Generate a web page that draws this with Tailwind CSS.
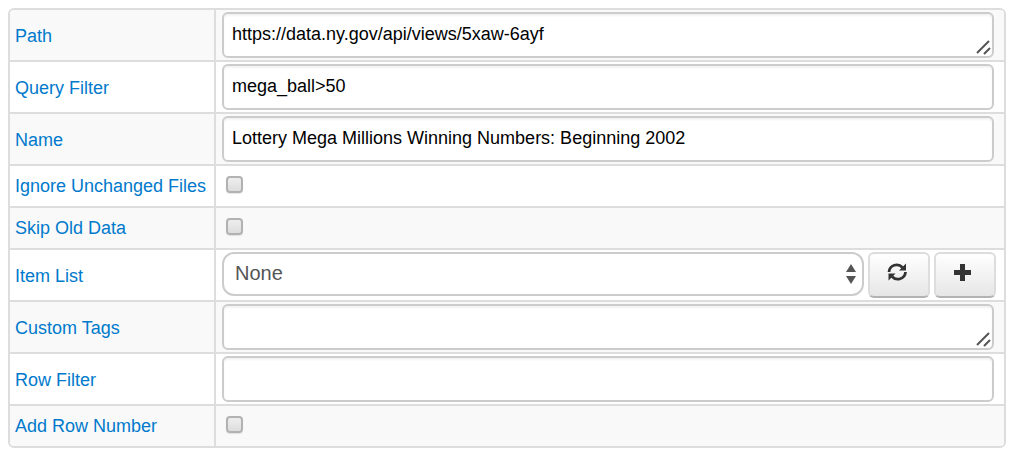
<!DOCTYPE html>
<html lang="en">
<head>
<meta charset="utf-8">
<meta name="viewport" content="width=device-width, initial-scale=1">
<title>Data source settings</title>
<script src="https://cdn.jsdelivr.net/npm/@tailwindcss/browser@4"></script>
</head>
<body class="bg-white p-2 font-['Liberation_Sans',Arial,sans-serif] text-lg leading-6 text-black">
<form>
<table class="w-full border-separate border-spacing-0 overflow-hidden rounded-md border-2 border-[#dddddd]">
  <tbody class="[&_th]:w-[206px] [&_th]:border-r-2 [&_th]:border-[#dddddd] [&_th]:pl-[5px] [&_th]:text-left [&_th]:font-normal [&_th]:whitespace-nowrap [&_th]:text-[#0079cc] [&_td]:border-[#dddddd] [&_td]:pl-1.5 [&_td]:pr-2.5 [&_tr:not(:last-child)>*]:border-b-2 [&_tr:nth-child(odd)]:bg-[#f9f9f9]">
    <tr class="h-[52px] [&>th]:pt-0.5">
      <th scope="row"><label for="path">Path</label></th>
      <td>
        <div class="relative flex">
          <textarea id="path" rows="1" class="h-[46px] w-full resize-none overflow-hidden rounded-md border-2 border-[#cccccc] bg-white px-2 py-2 shadow-[inset_0_2px_2px_rgba(0,0,0,0.05)] outline-none">https://data.ny.gov/api/views/5xaw-6ayf</textarea>
          <svg class="pointer-events-none absolute right-[3px] bottom-[3px] size-4" viewBox="0 0 16 16" fill="none" stroke="#555555" stroke-width="2" aria-hidden="true"><path d="M2 14 14 2M9 15l6-6"/></svg>
        </div>
      </td>
    </tr>
    <tr class="h-[52px] [&>th]:pt-0.5">
      <th scope="row"><label for="query">Query Filter</label></th>
      <td><input id="query" type="text" value="mega_ball&gt;50" class="block h-[46px] w-full rounded-md border-2 border-[#cccccc] bg-white px-2 pb-0.5 shadow-[inset_0_2px_2px_rgba(0,0,0,0.05)] outline-none"></td>
    </tr>
    <tr class="h-[52px] [&>th]:pt-0.5">
      <th scope="row"><label for="name">Name</label></th>
      <td><input id="name" type="text" value="Lottery Mega Millions Winning Numbers: Beginning 2002" class="block h-[46px] w-full rounded-md border-2 border-[#cccccc] bg-white px-2 pb-0.5 shadow-[inset_0_2px_2px_rgba(0,0,0,0.05)] outline-none"></td>
    </tr>
    <tr class="h-[42px]">
      <th scope="row"><label for="ignore">Ignore Unchanged Files</label></th>
      <td><input id="ignore" type="checkbox" class="mb-1 ml-1 block size-[17px] appearance-none rounded border-2 border-[#b2b2b2] bg-linear-to-b from-[#eeeeee] to-[#dddddd] shadow-[0_1px_1px_rgba(0,0,0,0.1)] checked:bg-[#0079cc]"></td>
    </tr>
    <tr class="h-[42px]">
      <th scope="row"><label for="skip">Skip Old Data</label></th>
      <td><input id="skip" type="checkbox" class="mb-1 ml-1 block size-[17px] appearance-none rounded border-2 border-[#b2b2b2] bg-linear-to-b from-[#eeeeee] to-[#dddddd] shadow-[0_1px_1px_rgba(0,0,0,0.1)] checked:bg-[#0079cc]"></td>
    </tr>
    <tr class="h-[52px] [&>th]:pt-0.5">
      <th scope="row"><label for="items">Item List</label></th>
      <td>
        <div class="-mr-0.5 flex items-start gap-1">
          <div class="relative flex-1">
            <select id="items" class="block h-11 w-full appearance-none rounded-xl border-2 border-[#cccccc] bg-white px-[11px] pb-0.5 text-xl text-[#555555] outline-none"><option>None</option></select>
            <svg class="pointer-events-none absolute top-3 right-[7px] h-5 w-3" viewBox="0 0 12 20" fill="#555555" aria-hidden="true"><path d="M6 0l5 8H1zM6 20l5-8H1z"/></svg>
          </div>
          <button type="button" aria-label="Refresh" class="flex h-[46px] w-[62px] justify-center rounded-md border-2 border-[#dddddd] border-b-[#b3b3b3] bg-linear-to-b from-white to-[#e6e6e6] pt-2">
            <svg class="mr-1 size-5" viewBox="0 0 20 20" aria-hidden="true"><g fill="none" stroke="#333333" stroke-width="2.8"><path d="M2 10C2.500 3 11 .500 15.500 5.500"/><path d="M18.500 10C18 17 9.500 19.500 5 14.500"/></g><path fill="#333333" d="M19 1.500V8.500H12zM1.500 18.500V11.500H8.500z"/></svg>
          </button>
          <button type="button" aria-label="Add" class="flex h-[46px] w-[62px] justify-center rounded-md border-2 border-[#dddddd] border-b-[#b3b3b3] bg-linear-to-b from-white to-[#e6e6e6] pt-2">
            <svg class="mr-1.5 size-5" viewBox="0 0 20 20" fill="#333333" aria-hidden="true"><path d="M8 2h5v6h6v5h-6v6H8v-6H2V8h6z"/></svg>
          </button>
        </div>
      </td>
    </tr>
    <tr class="h-[52px] [&>th]:pt-0.5">
      <th scope="row"><label for="tags">Custom Tags</label></th>
      <td>
        <div class="relative flex">
          <textarea id="tags" rows="1" class="h-[46px] w-full resize-none overflow-hidden rounded-md border-2 border-[#cccccc] bg-white px-2 py-2 shadow-[inset_0_2px_2px_rgba(0,0,0,0.05)] outline-none"></textarea>
          <svg class="pointer-events-none absolute right-[3px] bottom-[3px] size-4" viewBox="0 0 16 16" fill="none" stroke="#555555" stroke-width="2" aria-hidden="true"><path d="M2 14 14 2M9 15l6-6"/></svg>
        </div>
      </td>
    </tr>
    <tr class="h-[52px] [&>th]:pt-0.5">
      <th scope="row"><label for="rowfilter">Row Filter</label></th>
      <td><input id="rowfilter" type="text" class="block h-[46px] w-full rounded-md border-2 border-[#cccccc] bg-white px-2 pb-0.5 shadow-[inset_0_2px_2px_rgba(0,0,0,0.05)] outline-none"></td>
    </tr>
    <tr class="h-10">
      <th scope="row"><label for="rownumber">Add Row Number</label></th>
      <td><input id="rownumber" type="checkbox" class="mb-1 ml-1 block size-[17px] appearance-none rounded border-2 border-[#b2b2b2] bg-linear-to-b from-[#eeeeee] to-[#dddddd] shadow-[0_1px_1px_rgba(0,0,0,0.1)] checked:bg-[#0079cc]"></td>
    </tr>
  </tbody>
</table>
</form>
</body>
</html>
